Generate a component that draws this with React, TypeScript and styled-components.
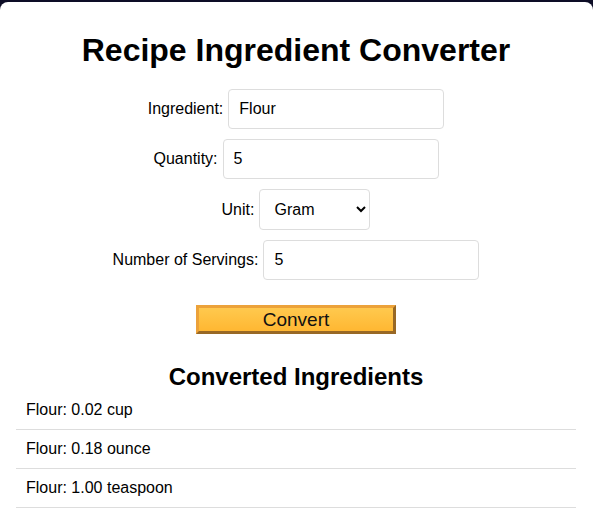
import React, { useState } from "react";
import styled, { createGlobalStyle } from "styled-components";

const GlobalStyle = createGlobalStyle`
  html, body {
    margin: 0;
    padding: 0;
    background: #0d0d26;
    font-family: "Liberation Sans", Arial, sans-serif;
  }
`;

const Card = styled.div`
  margin-top: 2px;
  background: #ffffff;
  border-radius: 8px;
  padding: 30px 17px 40px 16px;
  color: #000;
`;

const Title = styled.h1`
  margin: 0 0 20px;
  text-align: center;
  font-size: 32px;
  font-weight: bold;
`;

const Row = styled.div`
  display: flex;
  justify-content: center;
  align-items: center;
  gap: 5px;
  margin-bottom: 10px;
`;

const Label = styled.label`
  font-size: 16px;
`;

const TextInput = styled.input`
  width: 216px;
  box-sizing: border-box;
  padding: 10px;
  font-size: 16px;
  font-family: "Liberation Sans", Arial, sans-serif;
  border: 1px solid #dddddd;
  border-radius: 4px;
  outline: none;
  color: #000;
`;

const Select = styled.select`
  width: 111px;
  height: 41px;
  box-sizing: border-box;
  padding: 0 6px 0 10px;
  font-size: 16px;
  font-family: "Liberation Sans", Arial, sans-serif;
  border: 1px solid #dddddd;
  border-radius: 4px;
  background: #fff;
  color: #000;
`;

const ButtonRow = styled.div`
  display: flex;
  justify-content: center;
  margin-top: 25px;
`;

const ConvertButton = styled.button`
  width: 200px;
  height: 29px;
  padding: 0 6px;
  font-size: 19px;
  font-family: "Liberation Sans", Arial, sans-serif;
  color: #111;
  background: linear-gradient(to bottom, #ffc94e, #ffb732);
  border: 3px outset #eca23a;
  cursor: pointer;
`;

const SubTitle = styled.h2`
  margin: 29px 0 0;
  text-align: center;
  font-size: 24px;
  font-weight: bold;
`;

const List = styled.ul`
  list-style: none;
  margin: 0;
  padding: 0;
`;

const Item = styled.li`
  padding: 10px;
  font-size: 16px;
  line-height: 18px;
  border-bottom: 1px solid #dddddd;
`;

export default function App() {
  const [ingredient, setIngredient] = useState("Flour");
  const [quantity, setQuantity] = useState("5");
  const [unit, setUnit] = useState("gram");
  const [servings, setServings] = useState("5");

  const results = [
    "Flour: 0.02 cup",
    "Flour: 0.18 ounce",
    "Flour: 1.00 teaspoon",
  ];

  return (
    <>
      <GlobalStyle />
      <Card>
        <Title>Recipe Ingredient Converter</Title>
        <Row>
          <Label>Ingredient:</Label>
          <TextInput value={ingredient} onChange={(e) => setIngredient(e.target.value)} />
        </Row>
        <Row>
          <Label>Quantity:</Label>
          <TextInput value={quantity} onChange={(e) => setQuantity(e.target.value)} />
        </Row>
        <Row>
          <Label>Unit:</Label>
          <Select value={unit} onChange={(e) => setUnit(e.target.value)}>
            <option value="gram">Gram</option>
            <option value="cup">Cup</option>
            <option value="ounce">Ounce</option>
            <option value="teaspoon">Teaspoon</option>
          </Select>
        </Row>
        <Row>
          <Label>Number of Servings:</Label>
          <TextInput value={servings} onChange={(e) => setServings(e.target.value)} />
        </Row>
        <ButtonRow>
          <ConvertButton>Convert</ConvertButton>
        </ButtonRow>
        <SubTitle>Converted Ingredients</SubTitle>
        <List>
          {results.map((r) => (
            <Item key={r}>{r}</Item>
          ))}
        </List>
      </Card>
    </>
  );
}
